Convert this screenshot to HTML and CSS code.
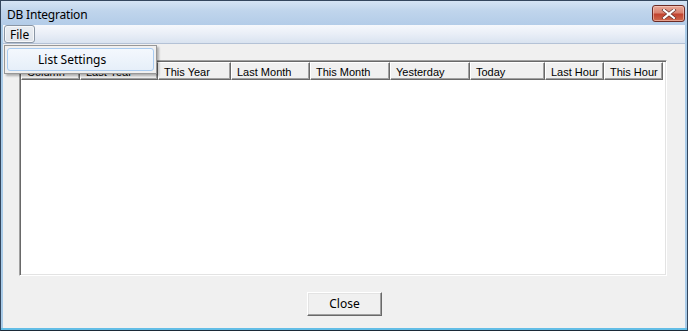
FILE: index.html
```html
<!DOCTYPE html>
<html lang="en">
<head>
  <meta charset="UTF-8">
  <title>DB Integration</title>
  <link rel="stylesheet" href="styles.css">
</head>
<body>
  <div class="window">
    <div class="titlebar">
      <span class="caption">DB Integration</span>
      <span class="close-x">
        <svg width="16" height="10" viewBox="0 0 16 10">
          <path d="M3 1 L13 9 M13 1 L3 9" stroke="#5a2a24" stroke-width="3.4" stroke-linecap="square"/>
          <path d="M3 1 L13 9 M13 1 L3 9" stroke="#fff" stroke-width="2.2" stroke-linecap="square"/>
        </svg>
      </span>
    </div>
    <div class="menubar">
      <span class="menu-item active">File</span>
    </div>
    <div class="client">
      <div class="listview">
        <div class="header">
          <span class="col" style="width:59px">Column</span>
          <span class="col" style="width:78px">Last Year</span>
          <span class="col" style="width:73px">This Year</span>
          <span class="col" style="width:79px">Last Month</span>
          <span class="col" style="width:80px">This Month</span>
          <span class="col" style="width:80px">Yesterday</span>
          <span class="col" style="width:75px">Today</span>
          <span class="col" style="width:59px">Last Hour</span>
          <span class="col" style="width:59px">This Hour</span>
        </div>
      </div>
      <div class="buttons">
        <button class="btn">Close</button>
      </div>
    </div>

    <div class="dropdown">
      <div class="dropdown-item">List Settings</div>
    </div>
  </div>
</body>
</html>
```

FILE: styles.css
```css
* {
  box-sizing: border-box;
}
body {
  margin: 0;
  width: 688px;
  height: 331px;
  overflow: hidden;
  font-family: "Noto Sans", "Open Sans", sans-serif;
  font-size: 12px;
  color: #000;
}

.window {
  position: relative;
  display: flex;
  flex-direction: column;
  width: 688px;
  height: 331px;
  border: 1px solid #34475e;
  border-bottom-color: #1c2a38;
  background: #a9cbe8;
  padding: 0 2px 2px;
  box-shadow: inset 0 -2px 0 #62bde6;
}

.titlebar {
  display: flex;
  align-items: center;
  justify-content: space-between;
  height: 24px;
  margin: 0 -2px;
  padding: 0 2px 0 6px;
  background: linear-gradient(to bottom, #d5e4f4 0%, #c0d5ec 40%, #b3cce8 100%);
}
.caption {
  font-size: 12px;
  letter-spacing: -0.2px;
  margin-top: 2px;
}
.close-x {
  display: flex;
  align-items: center;
  justify-content: center;
  width: 33px;
  height: 17px;
  margin-top: 1px;
  border: 1px solid #6b2b25;
  border-radius: 3px;
  background: linear-gradient(to bottom, #e8a898 0%, #d98371 45%, #c1432f 55%, #cf6a4e 100%);
  box-shadow: inset 0 0 0 1px rgba(255, 220, 210, 0.5);
}

.menubar {
  display: flex;
  align-items: center;
  height: 19px;
  padding-left: 1px;
  background: linear-gradient(to bottom, #f6f8fc 0%, #e9eef7 50%, #d9e3f0 100%);
  border-bottom: 1px solid #b4c2d6;
}
.menu-item {
  padding: 1px 5px 0;
  line-height: 15px;
}
.menu-item.active {
  border: 1px solid #8a96a5;
  border-radius: 3px;
  background: linear-gradient(to bottom, #e9edf2 0%, #dfe4eb 100%);
  box-shadow: inset 0 0 0 1px #f6f8fa;
}

.client {
  flex: 1;
  display: flex;
  flex-direction: column;
  background: #f0f0f0;
  padding: 16px 18px 11px 16px;
}

.listview {
  height: 216px;
  background: #fff;
  border-top: 1px solid #a0a0a0;
  border-left: 1px solid #a0a0a0;
  border-right: 1px solid #fff;
  border-bottom: 1px solid #fff;
  box-shadow: inset 1px 1px 0 #696969, inset -1px -1px 0 #e3e3e3;
  padding: 1px;
}
.header {
  display: flex;
  height: 18px;
}
.col {
  flex: none;
  height: 18px;
  padding: 2px 0 0 5px;
  font-family: "Liberation Sans", Arial, sans-serif;
  font-size: 11px;
  line-height: 15px;
  white-space: nowrap;
  overflow: hidden;
  background: #f0f0f0;
  border-top: 1px solid #fff;
  border-left: 1px solid #fff;
  border-right: 1px solid #696969;
  border-bottom: 1px solid #696969;
  box-shadow: inset -1px -1px 0 #a0a0a0;
}

.buttons {
  display: flex;
  justify-content: center;
  padding: 16px 0 0 3px;
}
.btn {
  width: 75px;
  height: 24px;
  font-family: "Noto Sans", "Open Sans", sans-serif;
  font-size: 12px;
  color: #000;
  background: #f0f0f0;
  border-top: 1px solid #fff;
  border-left: 1px solid #fff;
  border-right: 1px solid #696969;
  border-bottom: 1px solid #696969;
  box-shadow: inset -1px -1px 0 #a0a0a0, inset 1px 1px 0 #e3e3e3;
  padding: 0 0 1px;
}

.dropdown {
  position: absolute;
  left: 3px;
  top: 44px;
  width: 153px;
  height: 29px;
  padding: 2px;
  background: #f0f0f0;
  border: 1px solid #979797;
  box-shadow: 2px 2px 2px rgba(0, 0, 0, 0.28);
}
.dropdown-item {
  height: 23px;
  line-height: 21px;
  padding-left: 30px;
  border: 1px solid #a8cbf0;
  border-radius: 3px;
  background: linear-gradient(to bottom, #f4f8fd 0%, #e6eff9 100%);
}
```
